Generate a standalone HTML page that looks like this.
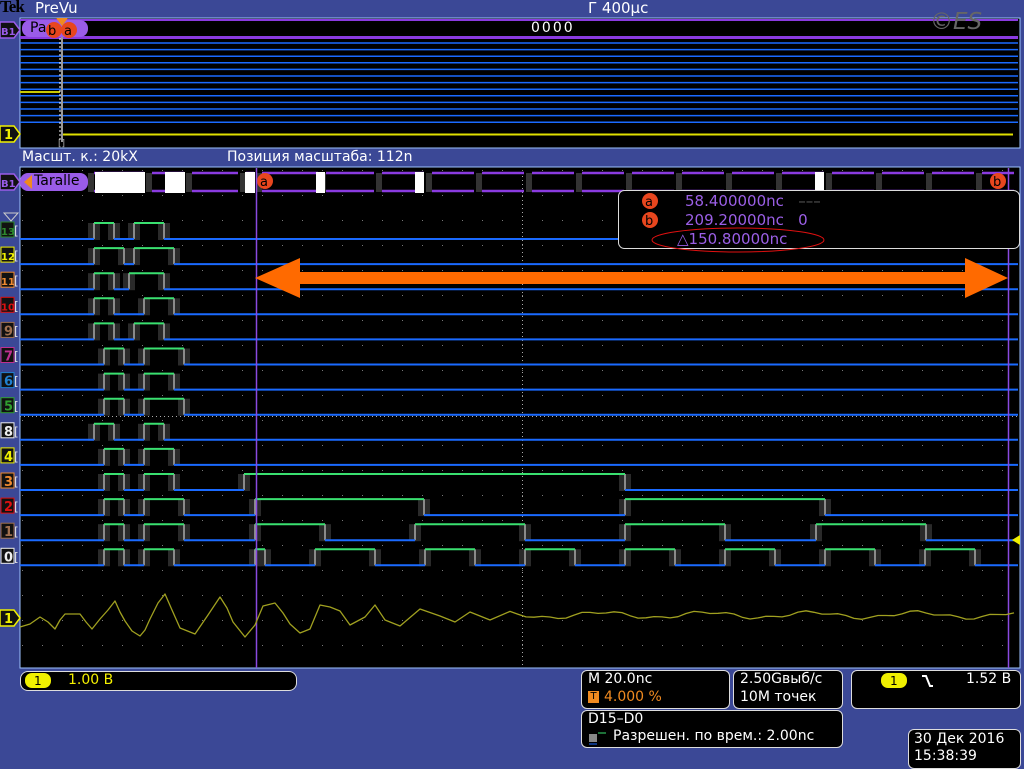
<!DOCTYPE html>
<html><head><meta charset="utf-8">
<style>
html,body{margin:0;padding:0}
body{width:1024px;height:768px;background:#3b4896;position:relative;overflow:hidden;font-family:"DejaVu Sans","Liberation Sans",sans-serif;color:#fff}
.t{position:absolute;white-space:nowrap;font-size:14px;line-height:16px;z-index:2}
.box{position:absolute;background:#000;border:1px solid #ddd;border-radius:6px;z-index:0}
svg{position:absolute;left:0;top:0;z-index:1}
</style></head><body>
<svg id="s" width="1024" height="768" xmlns="http://www.w3.org/2000/svg"></svg>

<div class="t" style="left:0;top:-1px;font-family:'Liberation Serif',serif;font-weight:bold;font-size:17px;color:#000;letter-spacing:-1px">Tek</div>
<div class="t" style="left:35px;top:0px;font-size:15px">PreVu</div>
<div class="t" style="left:588px;top:0px;font-size:15px">Г 400μс</div>
<div class="t" style="left:531px;top:20px;font-size:14px;letter-spacing:2px">0000</div>
<div class="t" style="left:930px;top:14px;font-size:23px;font-style:italic;color:#666">©ES</div>
<div class="t" style="left:22px;top:149px;font-size:14px">Масшт. к.: 20kX</div>
<div class="t" style="left:227px;top:149px;font-size:14px">Позиция масштаба: 112n</div>
<div class="t" style="left:30px;top:20px;font-size:14px;color:#000">Pa</div>
<div class="t" style="left:34px;top:173px;font-size:14px;color:#000">Taralle</div>

<div class="t" style="left:685px;top:193px;color:#9b5fe6;font-size:15px">58.400000nc &nbsp;&nbsp;<span style="color:#555">–––</span></div>
<div class="t" style="left:685px;top:212px;color:#9b5fe6;font-size:15px">209.20000nc &nbsp;&nbsp;0</div>
<div class="t" style="left:677px;top:231px;color:#9b5fe6;font-size:15px">△150.80000nc</div>

<div class="box" style="left:20px;top:671px;width:275px;height:18px;border-radius:8px"></div>
<div class="t" style="left:68px;top:672px;color:#f4f000">1.00 В</div>
<div class="box" style="left:581px;top:670px;width:147px;height:37px"></div>
<div class="t" style="left:588px;top:671px">M 20.0nc</div>
<div class="t" style="left:604px;top:689px;color:#f08a20"><span style="position:absolute;left:-16px;top:2px;width:11px;height:12px;background:#f08a20;color:#000;font-size:10px;line-height:12px;text-align:center">T</span>4.000 %</div>
<div class="box" style="left:733px;top:670px;width:108px;height:37px"></div>
<div class="t" style="left:740px;top:671px">2.50Gвыб/с</div>
<div class="t" style="left:740px;top:689px">10M точек</div>
<div class="box" style="left:851px;top:670px;width:168px;height:37px"></div>
<div class="t" style="left:966px;top:671px">1.52 В</div>
<div class="box" style="left:581px;top:710px;width:260px;height:36px"></div>
<div class="t" style="left:588px;top:711px">D15–D0</div>
<div class="t" style="left:613px;top:728px">Разрешен. по врем.: 2.00nc</div>
<div class="box" style="left:908px;top:729px;width:111px;height:38px"></div>
<div class="t" style="left:914px;top:731px">30 Дек 2016</div>
<div class="t" style="left:914px;top:748px">15:38:39</div>

<script>
var s=document.getElementById('s'),h='';
function R(x,y,w,hh,f,ex){h+='<rect x="'+x+'" y="'+y+'" width="'+w+'" height="'+hh+'" fill="'+f+'" '+(ex||'')+'/>';}
function L(x1,y1,x2,y2,c,w,ex){h+='<line x1="'+x1+'" y1="'+y1+'" x2="'+x2+'" y2="'+y2+'" stroke="'+c+'" stroke-width="'+(w||1)+'" '+(ex||'')+'/>';}
function T(x,y,t,c,sz,ex){h+='<text x="'+x+'" y="'+y+'" fill="'+c+'" font-size="'+(sz||12)+'" font-family="DejaVu Sans,sans-serif" '+(ex||'')+'>'+t+'</text>';}
function C(x,y,r,f){h+='<circle cx="'+x+'" cy="'+y+'" r="'+r+'" fill="'+f+'"/>';}
// preview
R(20,18,1000,130,'#000','stroke="#9cc2ff" stroke-width="1"');
L(20,20,1018,20,'#8a3be0',2);L(20,37.5,1018,37.5,'#8a3be0',3);
for(var i=0;i<13;i++){var y=43+i*6.6;L(20,y,1018,y,'#1a6aff',1.5);}
L(63,134.5,1013,134.5,'#e0e000',2);L(20,92,60,92,'#c8c800',2);
L(62,22,62,142,'#999',2);L(60,22,60,142,'#fff',1,'stroke-dasharray="2 2"');
h+='<rect x="22" y="20" width="66" height="17" rx="8" fill="#9a5ce8"/>';
C(54,30,8,'#e8461e');C(69,30,8,'#e8461e');T(48,35,'b','#000',13);T(64,35,'a','#000',13);
h+='<polygon points="56,18 68,18 62,26" fill="#f08a20"/>';
T(58,146,'[]','#aaa',9);
// main screen
R(20,167,1000,501,'#000','stroke="#9cc2ff" stroke-width="1"');
for(var gx=22;gx<1020;gx+=20)for(var gy=170;gy<668;gy+=25)R(gx,gy,1,1,'#777');
for(var gy=172;gy<668;gy+=4)R(522,gy,1,1,'#aaa');
for(var gx=20;gx<1020;gx+=4)R(gx,416,1,1,'#aaa');
// bus row
var b=[20,90,148,188,242,258,322,378,428,478,528,578,628,678,728,778,828,878,928,978,1018];
for(var i=1;i<b.length-1;i++){L(b[i]+4,173,b[i+1]-4,173,'#8a3be0',2.5);L(b[i]+4,191,b[i+1]-4,191,'#8a3be0',2.5);R(b[i]-2,173,6,19,'#333');}
R(95,172,50,21,'#fff');R(165,172,20,21,'#fff');R(245,172,10,21,'#fff');R(316,172,9,21,'#fff');R(415,172,9,21,'#fff');R(815,172,9,21,'#fff');
h+='<rect x="20" y="173" width="68" height="18" rx="8" fill="#9a5ce8"/>';
h+='<polygon points="24,182 32,175 32,189" fill="#f08a20"/>';
C(265,181,8,'#e8461e');T(260,186,'a','#000',13);C(998,181,8,'#e8461e');T(993,186,'b','#000',13);
// channels
var ch=[['13','#2e8a2e',[[94,114],[134,164]]],['12','#f0f000',[[94,124],[134,174]]],['11','#f08a30',[[94,114],[129,164]]],['10','#e01010',[[94,114],[144,174]]],['9','#a07050',[[94,114],[134,164]]],['7','#c03090',[[104,124],[144,184]]],['6','#2080d0',[[104,124],[144,174]]],['5','#30a030',[[104,124],[144,184]]],['8','#eee',[[94,114],[144,164]]],['4','#f0f000',[[104,124],[144,174]]],['3','#f08a30',[[104,124],[144,174],[244,625]]],['2','#e01010',[[104,124],[144,184],[255,424],[625,825]]],['1','#a07050',[[104,124],[144,184],[255,325],[415,525],[625,725],[816,926]]],['0','#eee',[[104,124],[144,174],[255,265],[315,375],[425,475],[525,575],[625,675],[725,775],[825,875],[925,975]]]];
for(var k=0;k<ch.length;k++){var by=239+k*25.1,hy=by-16,c=ch[k];
 var x=20;
 c[2].forEach(function(q){R(q[0]-6,hy,12,17,'#2a2a2a');R(q[1]-6,hy,12,17,'#2a2a2a');});
 var pb='',pg='';
 c[2].forEach(function(q){pb+='M'+x+','+by+'H'+q[0];pg+='M'+q[0]+','+hy+'H'+q[1];L(q[0],hy,q[0],by,'#aaa',1.5);L(q[1],hy,q[1],by,'#aaa',1.5);x=q[1];});
 pb+='M'+x+','+by+'H1018';
 h+='<path d="'+pb+'" stroke="#1a6aff" stroke-width="2" fill="none"/><path d="'+pg+'" stroke="#3ae070" stroke-width="2" fill="none"/>';
 var ly=by-9;
 R(1,ly-8,13,15,'#111','stroke="'+c[1]+'"');T(c[0].length>1?1:4,ly+5,c[0],c[1],c[0].length>1?10:13,'font-weight="bold"');
 T(14,ly+5,'[','#ddd',12);
}
h+='<polygon points="4,213 18,213 11,221" fill="none" stroke="#ccc"/>';
h+='<polygon points="1020,535 1012,540 1020,545" fill="#f0f000"/>';
// cursors
L(256.5,168,256.5,668,'#8a4ae0',1.5);L(1008.5,168,1008.5,668,'#8a4ae0',1.5);
// measurement box
h+='<rect x="618.5" y="190.5" width="401" height="58" rx="6" fill="#000" stroke="#ddd"/>';
// orange arrow
h+='<polygon points="255,278 300,258 300,272 965,272 965,258 1008,278 965,298 965,284 300,284 300,298" fill="#ff6a00"/>';
h+='<ellipse cx="738" cy="240" rx="86" ry="12" fill="none" stroke="#e01010" stroke-width="1"/>';
C(650,201,8,'#e8461e');T(645,206,'a','#000',13);C(650,220,8,'#e8461e');T(645,225,'b','#000',13);
// analog trace
var pts=[[20,627],[30,624],[40,617],[48,622],[55,629],[60,620],[65,614],[80,614],[86,622],[92,629],[100,619],[108,610],[115,601],[120,612],[125,621],[132,631],[140,636],[145,630],[150,619],[158,603],[165,594],[172,610],[180,628],[195,634],[208,615],[220,597],[227,608],[233,622],[245,637],[255,625],[263,606],[275,603],[283,613],[290,624],[300,633],[310,629],[320,605],[330,607],[340,611],[350,625],[365,617],[375,605],[385,620],[400,626],[420,609],[440,616],[455,622],[470,612],[490,620]];
for(var x2=510;x2<=1018;x2+=8)pts.push([x2,(615+Math.sin(x2*0.06)*3+Math.sin(x2*0.17)*1.5).toFixed(1)]);
h+='<polyline points="'+pts.map(function(p){return p.join(',')}).join(' ')+'" fill="none" stroke="#a0a020" stroke-width="1.3" stroke-linejoin="round"/>';
function M(y,t,c){h+='<polygon points="0,'+(y-8)+' 14,'+(y-8)+' 20,'+y+' 14,'+(y+8)+' 0,'+(y+8)+'" fill="#111" stroke="'+c+'" stroke-width="1.5"/>';T(4,y+5,t,c,13,'font-weight="bold"');}
M(618,'1','#f0f000');M(134,'1','#f0f000');
h+='<polygon points="0,22 14,22 20,30 14,38 0,38" fill="#111" stroke="#9a5ce8" stroke-width="1.5"/>';T(1,35,'B1','#9a5ce8',10,'font-weight="bold"');
h+='<polygon points="0,174 14,174 20,182 14,190 0,190" fill="#111" stroke="#9a5ce8" stroke-width="1.5"/>';T(1,187,'B1','#9a5ce8',10,'font-weight="bold"');
// status pills
h+='<rect x="25" y="673" width="26" height="15" rx="7" fill="#f0f000"/>';T(34,685,'1','#000',12);
h+='<rect x="881" y="673" width="26" height="15" rx="7" fill="#f0f000"/>';T(890,685,'1','#000',12);
h+='<path d="M922,676 H926 L930,686 H933" stroke="#fff" stroke-width="2" fill="none"/>';
h+='<rect x="589" y="734" width="8" height="8" fill="#888"/><line x1="598" y1="733" x2="606" y2="733" stroke="#3ae070"/><line x1="589" y1="744" x2="597" y2="744" stroke="#1a6aff"/>';
s.innerHTML=h;
</script>
</body></html>
